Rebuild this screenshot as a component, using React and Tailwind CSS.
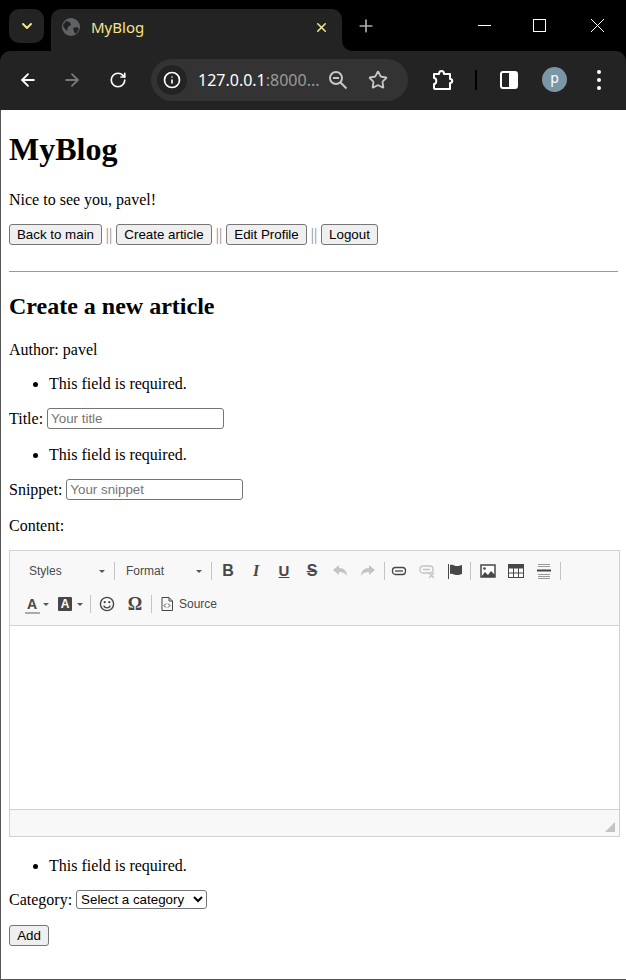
import { ChevronDown, X, Plus, ArrowLeft, ArrowRight, RotateCw, Info, Star } from "lucide-react";

const serif = { fontFamily: '"Liberation Serif", serif' };

function Sep() {
  return <span className="w-px h-[18px] bg-[#c4c4c4] shrink-0" />;
}

// CKEditor toolbar button, fixed width so the icons keep their spacing
function Tool({ children }) {
  return <span className="w-[28px] h-[24px] flex items-center justify-center shrink-0">{children}</span>;
}

function Arrow() {
  return <span className="w-0 h-0 border-x-[3px] border-x-transparent border-t-[3px] border-t-[#555] shrink-0" />;
}

function Combo({ label }) {
  return (
    <span className="w-[85px] h-[24px] flex items-center justify-between shrink-0 pr-[9px] text-[12px] text-[#484848]">
      <span>{label}</span>
      <Arrow />
    </span>
  );
}

function Required({ margin = "my-4" }) {
  return (
    <ul className={`list-disc pl-10 leading-[18px] ${margin}`}>
      <li>This field is required.</li>
    </ul>
  );
}

function PageButton({ width, children }) {
  return (
    <button className={`${width} h-[21px] bg-[#efefef] border border-[#767676] rounded-[3px] text-[13.33px] leading-[15px] text-black text-center whitespace-nowrap shrink-0 font-['Liberation_Sans',sans-serif]`}>
      {children}
    </button>
  );
}

function Divider() {
  return <span className="text-[#888] w-[14px] text-center shrink-0">||</span>;
}

function Chrome() {
  return (
    <div className="shrink-0 bg-black font-['Noto_Sans',sans-serif]">
      {/* Tab strip */}
      <div className="h-[51px] flex items-start pl-[9px] pt-[9px] relative">
        <span className="w-[35px] h-[34px] rounded-[10px] bg-[#232323] flex items-center justify-center text-[#f5e38c]">
          <ChevronDown size={16} strokeWidth={3} />
        </span>
        <div className="ml-[7px] w-[291px] h-[42px] rounded-t-[10px] bg-[#232323] flex items-center pl-[11px] pr-[13px] pb-[6px] relative">
          <svg width="18" height="18" viewBox="0 0 18 18" className="shrink-0">
            <circle cx="9" cy="9" r="9" fill="#5f6368" />
            <path d="M4 3l4 1 1 3-3 2-1 4-3-3-1-3zM11 10l4-1 2 2-3 5-2-2z" fill="#232323" />
          </svg>
          <span className="ml-[11px] text-[15px] text-[#f5e38c] flex-1 leading-[18px]">MyBlog</span>
          <X size={15} strokeWidth={2.5} className="text-[#f5e38c]" />
          <svg width="12" height="12" viewBox="0 0 12 12" className="absolute -right-[12px] bottom-0">
            <path d="M0 0C0 8 4 12 12 12H0z" fill="#232323" />
          </svg>
        </div>
        <Plus size={20} strokeWidth={2} className="ml-[14px] mt-[7px] text-[#a9aeb4]" />
        <div className="absolute right-0 top-0 h-[51px] flex items-start">
          <svg width="58" height="51" viewBox="0 0 58 51">
            <path d="M25 25.5h13" stroke="#fff" fill="none" />
          </svg>
          <svg width="58" height="51" viewBox="0 0 58 51">
            <rect x="22.5" y="19.5" width="12" height="12" stroke="#fff" fill="none" />
          </svg>
          <svg width="58" height="51" viewBox="0 0 58 51" className="-ml-[1px]">
            <path d="M23 19l13 13M36 19L23 32" stroke="#fff" fill="none" />
          </svg>
        </div>
      </div>
      {/* Address bar */}
      <div className="h-[59px] pb-[2px] rounded-t-[10px] bg-[#232323] flex items-center text-white">
        <ArrowLeft size={20} strokeWidth={2.2} className="ml-[18px]" />
        <ArrowRight size={20} strokeWidth={2.2} className="ml-[24px] text-[#777]" />
        <RotateCw size={18} strokeWidth={2.2} className="ml-[27px]" />
        <div className="ml-[24px] w-[257px] h-[42px] rounded-full bg-[#333] flex items-center pl-[6px]">
          <span className="w-[30px] h-[30px] rounded-full bg-[#232323] flex items-center justify-center">
            <Info size={18} strokeWidth={2.2} />
          </span>
          <span className="ml-[11px] text-[16px] leading-[20px] w-[126px] whitespace-nowrap overflow-hidden">
            127.0.0.1<span className="text-[#9a9a9a]">:8000...</span>
          </span>
          {/* Zoom out, handle runs further than lucide's */}
          <svg width="20" height="20" viewBox="0 0 20 20" className="ml-[4px]">
            <circle cx="8" cy="8" r="6" fill="none" stroke="#c7c7c7" strokeWidth="2" />
            <path d="M12.5 12.5l6 6M5 8h6" stroke="#c7c7c7" strokeWidth="2" />
          </svg>
          <Star size={20} strokeWidth={2.2} className="ml-[20px] text-[#c7c7c7]" />
        </div>
        {/* Extensions puzzle piece */}
        <svg width="22" height="22" viewBox="0 0 22 22" className="ml-[24px]">
          <path d="M2 5h5c0-4 5-4 5 0h6v5c3 0 3 4 0 4v6H3c-1 0-1-1-1-1v-4c3 0 3-6 0-6z" stroke="#fff" strokeWidth="2" fill="none" strokeLinejoin="round" />
        </svg>
        <span className="ml-[21px] w-[2px] h-[20px] bg-black" />
        {/* Side panel */}
        <svg width="18" height="18" viewBox="0 0 18 18" className="ml-[23px]">
          <rect x="1" y="1" width="16" height="16" rx="2" stroke="#fff" strokeWidth="2" fill="none" />
          <rect x="9" y="1" width="8" height="16" fill="#fff" />
        </svg>
        <span className="ml-[24px] w-[25px] h-[25px] rounded-full bg-[#7a97a8] flex items-center justify-center text-[14px] leading-none pb-[3px]">p</span>
        <svg width="6" height="20" viewBox="0 0 6 20" className="ml-[29px]">
          <circle cx="3" cy="2" r="2" fill="#fff" />
          <circle cx="3" cy="10" r="2" fill="#fff" />
          <circle cx="3" cy="18" r="2" fill="#fff" />
        </svg>
      </div>
    </div>
  );
}

function Editor() {
  const dark = "#474747";
  const light = "#c4c4c4";
  return (
    <div className="mt-[15px] w-[611px] h-[287px] border border-[#d1d1d1] flex flex-col font-['Liberation_Sans',sans-serif]">
      <div className="h-[75px] bg-[#f8f8f8] border-b border-[#d1d1d1] shrink-0">
        {/* First toolbar row */}
        <div className="flex items-center h-[24px] mt-[8px] pl-[19px]">
          <Combo label="Styles" />
          <Sep />
          <span className="w-[11px]" />
          <Combo label="Format" />
          <Sep />
          <span className="w-[2px]" />
          <Tool><span className="text-[16px] font-bold text-[#474747]">B</span></Tool>
          <Tool><span className="text-[16px] font-bold italic text-[#474747] font-['Liberation_Serif',serif]">I</span></Tool>
          <Tool><span className="text-[15px] font-bold underline text-[#474747]">U</span></Tool>
          <Tool><span className="text-[16px] font-bold line-through text-[#474747]">S</span></Tool>
          <Tool>
            <svg width="16" height="16" viewBox="0 0 16 16"><path d="M1 7l6-5v3c5 0 8 3 8 8-2-3-4-4-8-4v3z" fill={light} /></svg>
          </Tool>
          <Tool>
            <svg width="16" height="16" viewBox="0 0 16 16"><path d="M15 7L9 2v3c-5 0-8 3-8 8 2-3 4-4 8-4v3z" fill={light} /></svg>
          </Tool>
          <span className="w-[2px]" />
          <Sep />
          <Tool>
            <svg width="16" height="16" viewBox="0 0 16 16"><rect x="1.5" y="4.5" width="13" height="7" rx="3" fill="none" stroke={dark} strokeWidth="1.3" /><path d="M4 8h8" stroke={dark} strokeWidth="1.3" /></svg>
          </Tool>
          <Tool>
            <svg width="16" height="16" viewBox="0 0 16 16"><rect x="1" y="3" width="13" height="7" rx="3" fill="none" stroke={light} strokeWidth="1.3" /><path d="M4 6.5h7M10 10l5 5M15 10l-5 5" stroke={light} strokeWidth="1.3" /></svg>
          </Tool>
          <Tool>
            <svg width="16" height="16" viewBox="0 0 16 16"><path d="M1.5 1v15" stroke={dark} /><path d="M3 2c4-1 4 1 6 1 2 0 3 0 6-1v9c-3 1-4 1-6 1-2 0-3-2-6-1z" fill={dark} /></svg>
          </Tool>
          <span className="w-[1px]" />
          <Sep />
          <span className="w-[3px]" />
          <Tool>
            <svg width="16" height="16" viewBox="0 0 16 16"><rect x="1" y="2" width="14" height="12" fill="#fff" stroke={dark} strokeWidth="1.5" /><path d="M1 14l4-5 3 3 3-4 4 4v2z" fill={dark} /><circle cx="4.5" cy="5.5" r="1.3" fill={dark} /></svg>
          </Tool>
          <Tool>
            <svg width="16" height="16" viewBox="0 0 16 16"><rect x="0.5" y="1.5" width="15" height="13" fill="#fff" stroke={dark} /><rect x="0.5" y="1.5" width="15" height="4" fill={dark} /><path d="M5.5 5v9M10.5 5v9M1 10h14" stroke={dark} /></svg>
          </Tool>
          <Tool>
            <svg width="16" height="16" viewBox="0 0 16 16"><path d="M2 1.5h12M2 3.5h12M2 11.5h12M2 13.5h12M2 15.5h12" stroke="#999" /><path d="M1 7.5h14" stroke={dark} strokeWidth="2" /></svg>
          </Tool>
          <span className="w-[2px]" />
          <Sep />
        </div>
        {/* Second toolbar row */}
        <div className="flex items-center h-[24px] mt-[9px] pl-[15px]">
          <span className="w-[14px] h-[19px] flex flex-col items-center justify-end shrink-0">
            <span className="text-[14px] leading-[15px] font-bold text-[#474747]">A</span>
            <span className="w-[15px] h-[2px] bg-[#aaa] shrink-0" />
          </span>
          <span className="w-[4px]" />
          <Arrow />
          <span className="w-[9px]" />
          <span className="w-[14px] h-[14px] bg-[#474747] rounded-[1px] text-white text-[12px] leading-[14px] font-bold text-center shrink-0">A</span>
          <span className="w-[5px]" />
          <Arrow />
          <span className="w-[7px]" />
          <Sep />
          <span className="w-[2px]" />
          <Tool>
            <svg width="16" height="16" viewBox="0 0 16 16"><circle cx="8" cy="8" r="6.6" fill="none" stroke={dark} strokeWidth="1.4" /><circle cx="5.7" cy="6.2" r="1.1" fill={dark} /><circle cx="10.3" cy="6.2" r="1.1" fill={dark} /><path d="M4.6 9.6c1.5 3 5.3 3 6.8 0" fill="none" stroke={dark} strokeWidth="1.3" /></svg>
          </Tool>
          <Tool><span className="text-[18px] font-bold text-[#474747] font-['Liberation_Serif',serif]">Ω</span></Tool>
          <span className="w-[2px]" />
          <Sep />
          <span className="w-[9px]" />
          <svg width="12" height="14" viewBox="0 0 12 14" className="shrink-0">
            <path d="M1 .5h7l3.5 3.5v9.5H1zM8 .5V4h3.5" fill="none" stroke={dark} />
            <path d="M5 6.5L3 8.5l2 2M7 6.5l2 2-2 2" fill="none" stroke={dark} />
          </svg>
          <span className="ml-[6px] text-[12px] text-[#484848]">Source</span>
        </div>
      </div>
      <div className="flex-1 bg-white" />
      <div className="h-[27px] bg-[#f8f8f8] border-t border-[#d1d1d1] shrink-0 flex items-end justify-end p-[4px]">
        <span className="w-0 h-0 border-l-[10px] border-l-transparent border-b-[10px] border-b-[#c4c4c4]" />
      </div>
    </div>
  );
}

export default function App() {
  const inputClass = "ml-[4px] w-[177px] h-[21px] px-[3px] border border-[#767676] rounded-[3px] text-[13.33px] placeholder:text-[#757575] font-['Liberation_Sans',sans-serif]";
  return (
    <div className="h-[980px] flex flex-col overflow-hidden bg-white">
      <Chrome />
      {/* Page */}
      <main className="flex-1 bg-white border-l border-[#555] border-b text-black text-[16px] leading-[18px] pl-[8px] pr-[8px]" style={serif}>
        <h1 className="text-[32px] font-bold leading-[37px] mt-[21px] mb-[23px]">MyBlog</h1>
        <p>Nice to see you, pavel!</p>
        <div className="mt-[15px] flex items-center h-[21px]">
          <PageButton width="w-[93px]">Back to main</PageButton>
          <Divider />
          <PageButton width="w-[96px]">Create article</PageButton>
          <Divider />
          <PageButton width="w-[81px]">Edit Profile</PageButton>
          <Divider />
          <PageButton width="w-[57px]">Logout</PageButton>
        </div>
        <hr className="mt-[26px] border-0 border-t-[1px] border-[#999]" />
        <h2 className="text-[24px] font-bold leading-[27px] mt-[21px]">Create a new article</h2>
        <p className="mt-[21px]">Author: pavel</p>
        <Required />
        <p className="h-[21px] -mt-[1px] mb-[17px] flex items-center">
          Title:
          <input placeholder="Your title" className={inputClass} />
        </p>
        <Required />
        <p className="h-[21px] -mt-[1px] mb-[17px] flex items-center">
          Snippet:
          <input placeholder="Your snippet" className={inputClass} />
        </p>
        <p>Content:</p>
        <Editor />
        <Required margin="mt-[20px] mb-[15px]" />
        <p className="h-[19px] flex items-center">
          Category:
          <select className="ml-[4px] w-[131px] h-[19px] border border-[#767676] rounded-[3px] text-[13.33px] font-['Liberation_Sans',sans-serif]">
            <option>Select a category</option>
          </select>
        </p>
        <div className="mt-[16px]">
          <PageButton width="w-[40px]">Add</PageButton>
        </div>
      </main>
    </div>
  );
}
